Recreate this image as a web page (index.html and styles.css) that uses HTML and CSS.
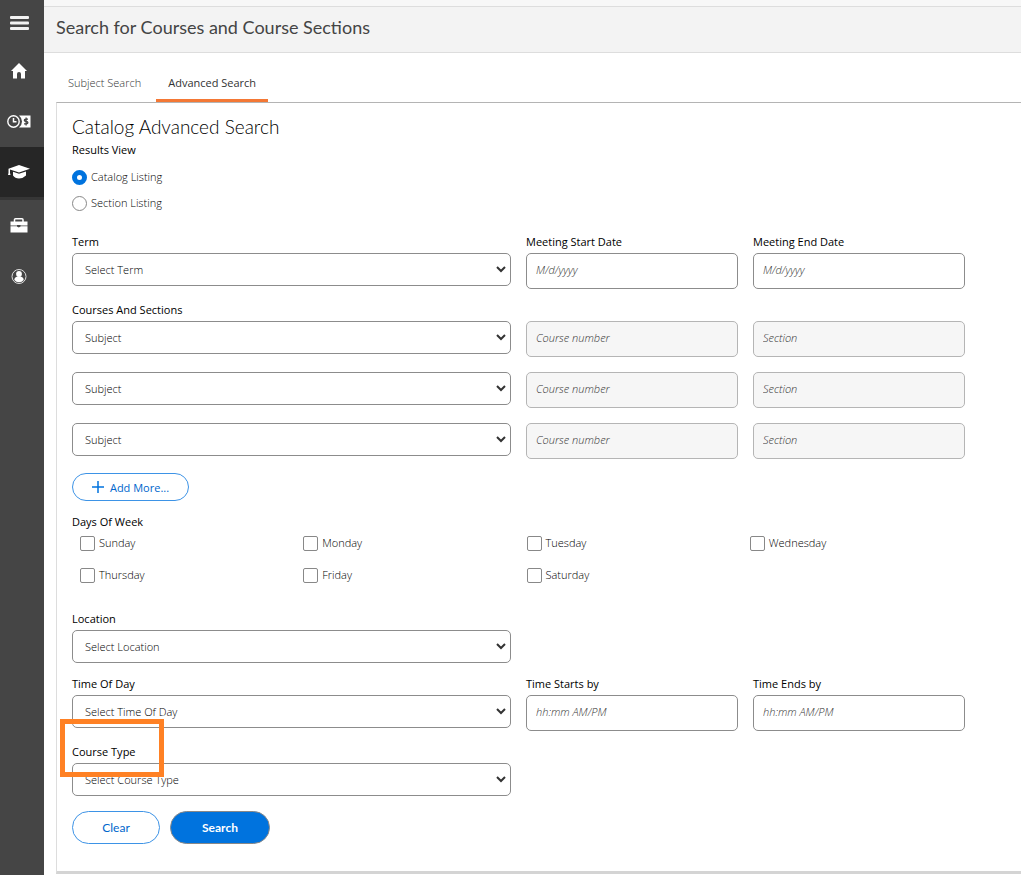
FILE: index.html
```html
<!DOCTYPE html>
<html lang="en">

<head>
    <meta charset="utf-8">
    <meta name="viewport" content="width=device-width, initial-scale=1.0">
    <title>Search for Courses and Course Sections</title>
    <link rel="stylesheet" href="styles.css">
</head>

<body>
    <nav class="sidebar">
        <button type="button" class="menu" aria-label="Menu">
            <svg width="20" height="16" viewBox="0 0 20 16" fill="#f2f2f2">
                <rect x="1" y="1" width="19" height="3" rx="1" />
                <rect x="1" y="6.500" width="19" height="3" rx="1" />
                <rect x="1" y="12" width="19" height="3" rx="1" />
            </svg>
        </button>
        <a href="#" aria-label="Home">
            <svg width="16" height="16" viewBox="0 0 16 16" fill="#fff">
                <path d="M8 0 L16 8 H14 V15.500 H10 V11 Q10 9 8 9 Q6 9 6 11 V15.500 H2 V8 H0 Z" />
            </svg>
        </a>
        <a href="#" aria-label="Financial information">
            <svg width="24" height="14" viewBox="0 0 24 14" fill="none">
                <path d="M12 .5 H23.500 V12.500 H12 Q15 10 15 6.500 Q15 3 12 .5 Z" fill="#fff" />
                <circle cx="6.500" cy="6.500" r="5.700" stroke="#fff" stroke-width="1.400" />
                <path d="M6.500 3 V6.700 H9.500" stroke="#fff" stroke-width="1.500" />
                <path d="M21 4.200 H18.800 Q17.300 4.200 17.300 5.300 Q17.300 6.300 19 6.500 Q20.900 6.700 20.900 7.800 Q20.900 8.900 19.300 8.900 H17 M19.100 2.500 V10.500" stroke="#454545" stroke-width="1.300" />
            </svg>
        </a>
        <a href="#" class="active" aria-label="Academics">
            <svg width="22" height="14" viewBox="0 0 22 14" fill="#fff">
                <path d="M11 0 L22 3.700 L11 7.500 L2 4.500 V8 L2.500 10 H0 L.5 8 V3.700 Z" />
                <path d="M5 6.700 L11 8.800 L18 6.500 V10.500 Q15 13.500 11 13.500 Q7 13.500 5 10.500 Z" />
            </svg>
        </a>
        <a href="#" aria-label="Employment">
            <svg width="18" height="16" viewBox="0 0 18 16">
                <path d="M4.500 4 V1.700 Q4.500 .8 5.500 .8 H12 Q13 .8 13 1.700 V4" fill="none" stroke="#fff" stroke-width="1.500" />
                <path d="M.5 3.500 H17.500 V7.500 H.5 Z M.5 8.300 H17.500 V14.500 H.5 Z" fill="#fff" />
                <path d="M7 7 H10.500 V8.500 L8.800 9.500 L7 8.500 Z" fill="#454545" />
            </svg>
        </a>
        <a href="#" aria-label="User profile">
            <svg width="16" height="16" viewBox="0 0 16 16" fill="none">
                <circle cx="8" cy="7.500" r="7" stroke="#ddd" />
                <circle cx="8" cy="5" r="2.900" fill="#fff" />
                <path d="M3.300 11 Q3.300 8 6.500 7.500 H9.500 Q12.700 8 12.700 11 Q11 13.300 8 13.300 Q5 13.300 3.300 11 Z" fill="#fff" />
            </svg>
        </a>
    </nav>

    <div class="page">
        <header>
            <h1>Search for Courses and Course Sections</h1>
        </header>
        <main>
            <div class="tabs">
                <a href="#">Subject Search</a>
                <a href="#" class="selected">Advanced Search</a>
            </div>

            <form class="panel">
                <h2>Catalog Advanced Search</h2>

                <fieldset class="results">
                    <legend>Results View</legend>
                    <label class="choice"><input type="radio" name="view" checked>Catalog Listing</label>
                    <label class="choice"><input type="radio" name="view">Section Listing</label>
                </fieldset>

                <div class="row">
                    <div class="field wide">
                        <label for="term">Term</label>
                        <select id="term">
                            <option>Select Term</option>
                        </select>
                    </div>
                    <div class="field">
                        <label for="start-date">Meeting Start Date</label>
                        <input type="text" id="start-date" placeholder="M/d/yyyy">
                    </div>
                    <div class="field">
                        <label for="end-date">Meeting End Date</label>
                        <input type="text" id="end-date" placeholder="M/d/yyyy">
                    </div>
                </div>

                <fieldset class="courses">
                    <legend>Courses And Sections</legend>
                    <div class="row">
                        <select class="wide" aria-label="Subject 1">
                            <option>Subject</option>
                        </select>
                        <input type="text" placeholder="Course number" aria-label="Course number 1" disabled>
                        <input type="text" placeholder="Section" aria-label="Section 1" disabled>
                        <select class="wide" aria-label="Subject 2">
                            <option>Subject</option>
                        </select>
                        <input type="text" placeholder="Course number" aria-label="Course number 2" disabled>
                        <input type="text" placeholder="Section" aria-label="Section 2" disabled>
                        <select class="wide" aria-label="Subject 3">
                            <option>Subject</option>
                        </select>
                        <input type="text" placeholder="Course number" aria-label="Course number 3" disabled>
                        <input type="text" placeholder="Section" aria-label="Section 3" disabled>
                    </div>
                    <button type="button" class="add">
                        <svg width="12" height="12" viewBox="0 0 12 12" stroke="#0073de" stroke-width="1.500">
                            <path d="M6 0 V12 M0 6 H12" />
                        </svg>
                        Add More...
                    </button>
                </fieldset>

                <fieldset class="days">
                    <legend>Days Of Week</legend>
                    <div class="day-list">
                        <label class="choice"><input type="checkbox">Sunday</label>
                        <label class="choice"><input type="checkbox">Monday</label>
                        <label class="choice"><input type="checkbox">Tuesday</label>
                        <label class="choice"><input type="checkbox">Wednesday</label>
                        <label class="choice"><input type="checkbox">Thursday</label>
                        <label class="choice"><input type="checkbox">Friday</label>
                        <label class="choice"><input type="checkbox">Saturday</label>
                    </div>
                </fieldset>

                <div class="row">
                    <div class="field wide">
                        <label for="location">Location</label>
                        <select id="location">
                            <option>Select Location</option>
                        </select>
                    </div>
                </div>

                <div class="row">
                    <div class="field wide">
                        <label for="time">Time Of Day</label>
                        <select id="time">
                            <option>Select Time Of Day</option>
                        </select>
                    </div>
                    <div class="field">
                        <label for="time-start">Time Starts by</label>
                        <input type="text" id="time-start" placeholder="hh:mm AM/PM">
                    </div>
                    <div class="field">
                        <label for="time-end">Time Ends by</label>
                        <input type="text" id="time-end" placeholder="hh:mm AM/PM">
                    </div>
                </div>

                <div class="row">
                    <div class="field wide marked">
                        <label for="type">Course Type</label>
                        <select id="type">
                            <option>Select Course Type</option>
                        </select>
                        <span class="marker"></span>
                    </div>
                </div>

                <div class="actions">
                    <button type="reset" class="clear">Clear</button>
                    <button type="submit" class="search">Search</button>
                </div>
            </form>
        </main>
    </div>
</body>

</html>
```
FILE: styles.css
```css
* {
    box-sizing: border-box;
    margin: 0;
}

body {
    display: flex;
    min-height: 100vh;
    font-family: "Open Sans", sans-serif;
    font-size: 11px;
    font-weight: 300;
    line-height: 16px;
    color: #000;
    background-color: #fff;
}

/* left menu */
.sidebar {
    display: flex;
    flex-direction: column;
    flex: none;
    width: 44px;
    background-color: #454545;
}

.sidebar a,
.menu {
    display: flex;
    justify-content: center;
    align-items: center;
    height: 51px;
    padding: 0 6px 0 0;
    border: none;
    background: none;
}

.sidebar .menu {
    height: 45px;
}

.sidebar .active {
    height: 53px;
    background-color: #262626;
    border-bottom: 3px solid #363636;
}

.page {
    flex: 1;
    min-width: 0;
    background-image: linear-gradient(#f7f7f7 6px, #fff 6px);
}

header {
    padding: 9px 12px 13px;
    background-color: #f3f3f3;
    border-top: 1px solid #ddd;
    border-bottom: 1px solid #ddd;
    margin-top: 6px;
}

h1,
h2 {
    font-family: Lato, sans-serif;
    font-size: 19px;
    line-height: 23px;
    font-weight: 300;
    color: #000;
}

h1 {
    font-size: 18px;
    font-weight: 400;
    color: #444;
}

main {
    padding: 14px 0 0 12px;
}

.tabs {
    display: flex;
    gap: 3px;
}

.tabs a {
    padding: 8px 12px;
    color: #333;
    text-decoration: none;
    border-bottom: 3px solid transparent;
}

.tabs .selected {
    font-weight: 500;
    border-bottom-color: #f47835;
}

.panel {
    padding: 12px 56px 27px 15px;
    border-top: 1px solid #b4b4b4;
    border-left: 1px solid #ddd;
    border-bottom: 3px solid #d4d4d4;
}

fieldset {
    padding: 0;
    border: none;
    min-width: 0;
}

legend,
.field label {
    display: block;
    padding: 0;
    margin-bottom: 3px;
    font-weight: 500;
}

h2 {
    margin-bottom: 4px;
}

.results {
    display: flex;
    flex-direction: column;
    gap: 10px;
    margin-bottom: 23px;
}

.results legend {
    margin-bottom: 11px;
}

.choice {
    display: flex;
    gap: 4px;
    line-height: 15px;
}

.choice input {
    appearance: none;
    flex: none;
    width: 15px;
    height: 15px;
    margin: 1px 0 0;
    border: 1px solid #888;
    border-radius: 2px;
    background-color: #fff;
}

.choice input[type="radio"] {
    border-radius: 50%;
}

.choice input[type="radio"]:checked {
    border: 5px solid #0073de;
}

.row {
    display: grid;
    grid-template-columns: repeat(4, 1fr);
    align-items: start;
    gap: 15px;
    margin-bottom: 13px;
}

.wide {
    grid-column: span 2;
}

select,
input[type="text"] {
    width: 100%;
    height: 33px;
    font-family: inherit;
    font-size: 11px;
    font-weight: 300;
    color: #000;
    border: 1px solid #8c8c8c;
    border-radius: 5px;
    background-color: #fff;
}

select {
    appearance: none;
    padding: 0 20px 0 12px;
    background-image: url("data:image/svg+xml,%3Csvg xmlns='http://www.w3.org/2000/svg' width='10' height='7'%3E%3Cpath d='M1 1 L5 5 L9 1' fill='none' stroke='%23333' stroke-width='2'/%3E%3C/svg%3E");
    background-repeat: no-repeat;
    background-position: right 4px center;
}

input[type="text"] {
    height: 36px;
    padding: 0 9px 3px;
}

input[type="text"]:disabled {
    border-color: #b5b5b5;
    background-color: #f6f6f6;
}

::placeholder {
    color: #333;
    font-style: italic;
}

button {
    font-family: inherit;
    font-size: 11px;
    color: #0066cc;
    background-color: #fff;
    border: 1px solid #3d93e6;
    border-radius: 17px;
}

.courses .row {
    margin-bottom: 14px;
}

.add {
    display: flex;
    justify-content: center;
    align-items: center;
    gap: 6px;
    width: 117px;
    height: 28px;
}

.days {
    margin: 13px 0 28px;
}

.days legend {
    margin-bottom: 5px;
}

.day-list {
    display: grid;
    grid-template-columns: repeat(4, 1fr);
    gap: 16px 0;
}

.day-list .choice {
    padding-left: 8px;
}

/* outline drawn round the Course Type label */
.marked {
    position: relative;
}

.marker {
    position: absolute;
    top: -25px;
    left: -12px;
    width: 104px;
    height: 58px;
    border: 5px solid #ff8124;
    pointer-events: none;
}

.actions {
    display: flex;
    gap: 10px;
    margin-top: 15px;
}

.actions button {
    height: 33px;
    font-family: Lato, sans-serif;
    font-size: 12px;
}

.clear {
    width: 88px;
}

.actions .search {
    width: 100px;
    font-weight: 700;
    color: #fff;
    background-color: #0073de;
    border-color: #888;
}
```
